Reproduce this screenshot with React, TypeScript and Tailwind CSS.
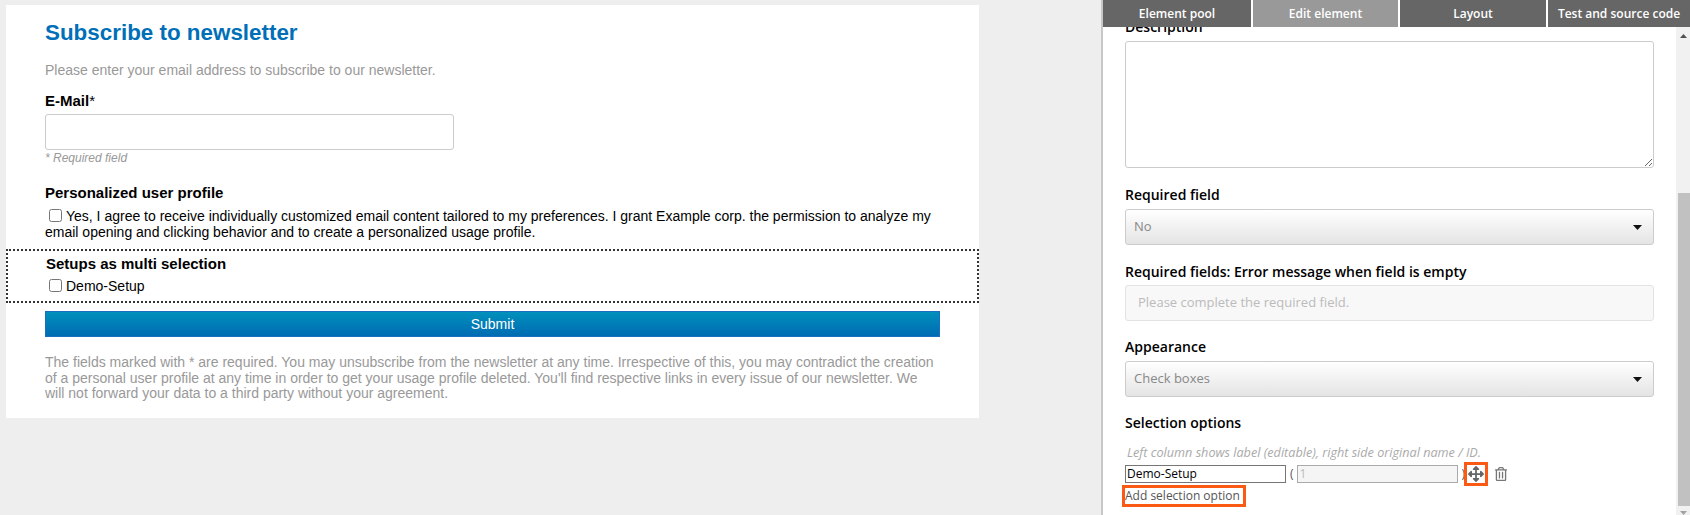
import { ReactNode } from "react";
import { FaArrowsAlt, FaRegTrashAlt } from "react-icons/fa";

const TABS = ["Element pool", "Edit element", "Layout", "Test and source code"];

function FormLabel({ children, className = "" }: { children: ReactNode; className?: string }) {
  return <p className={`text-[15px] font-bold leading-4 text-black ${className}`}>{children}</p>;
}

function Newsletter() {
  return (
    <div className="h-[413px] w-[973px] bg-white font-['Liberation_Sans',Arial,sans-serif] text-[14px]">
      <div className="px-[39px] pt-[14px]">
        <h1 className="text-[22.4px] font-bold leading-[28px] text-[#006fb8]">Subscribe to newsletter</h1>
        <p className="mt-[15px] leading-4 text-[#999]">Please enter your email address to subscribe to our newsletter.</p>
        <FormLabel className="mt-[15px]">
          E-Mail<span className="font-normal">*</span>
        </FormLabel>
        <input className="mt-[5px] block h-[36px] w-[409px] rounded-[3px] border border-[#ccc] bg-white" />
        <p className="mt-px text-[12px] italic leading-[14px] text-[#999]">* Required field</p>
        <FormLabel className="mt-[20px]">Personalized user profile</FormLabel>
        <p className="mt-[8px] w-[900px] leading-[15px] text-black">
          <input type="checkbox" className="mx-[4px] mb-[3px] inline-block size-[13px] align-middle" />
          Yes, I agree to receive individually customized email content tailored to my preferences. I grant Example corp. the permission to analyze my email opening and clicking behavior and to create a personalized usage profile.
        </p>
      </div>
      <div className="mt-[9px] h-[54px] border-2 border-dotted border-[#333] pl-[38px] pt-[5px]">
        <FormLabel>Setups as multi selection</FormLabel>
        <label className="mt-[4px] flex items-center text-black">
          <input type="checkbox" className="mb-[2px] ml-[3px] mr-[4px] size-[13px]" />
          Demo-Setup
        </label>
      </div>
      <div className="px-[39px]">
        <button className="mt-[8px] block h-[26px] w-[895px] border border-[#1a6fc0] bg-gradient-to-b from-[#0090bb] to-[#006bb3] text-center text-white">
          Submit
        </button>
        <p className="mt-[18px] w-[895px] leading-[15.5px] text-[#999]">
          The fields marked with * are required. You may unsubscribe from the newsletter at any time. Irrespective of this, you may contradict the creation of a personal user profile at any time in order to get your usage profile deleted. You'll find respective links in every issue of our newsletter. We will not forward your data to a third party without your agreement.
        </p>
      </div>
    </div>
  );
}

function SelectBox({ value }: { value: string }) {
  return (
    <div className="flex h-[36px] items-center justify-between rounded-[3px] border border-[#ccc] bg-gradient-to-b from-white to-[#e4e4e4] pl-[8px] pr-[11px] text-[13px] text-[#888]">
      {value}
      <svg width="9" height="5" viewBox="0 0 9 5">
        <path d="M0 0h9L4.5 5z" fill="#111" />
      </svg>
    </div>
  );
}

function FieldLabel({ children, className = "" }: { children: ReactNode; className?: string }) {
  return <p className={`text-[14px] font-semibold leading-[20px] text-black ${className}`}>{children}</p>;
}

function Editor() {
  return (
    <div className="flex flex-1 flex-col border-l-2 border-[#c8c8c8] bg-white font-['Open_Sans',sans-serif]">
      <div className="relative z-10 grid h-[27px] grid-cols-[148px_145px_146px_1fr] gap-[2px] bg-white">
        {TABS.map((tab) => (
          <div
            key={tab}
            className={`flex items-center justify-center text-[12px] font-semibold text-white ${tab === "Edit element" ? "bg-[#999]" : "bg-[#666]"}`}
          >
            {tab}
          </div>
        ))}
      </div>
      <div className="flex min-h-0 flex-1">
        <div className="min-w-0 flex-1 overflow-hidden px-[22px]">
          <FieldLabel className="-mt-[10px]">Description</FieldLabel>
          <textarea className="mt-[4px] block h-[127px] w-full rounded-[3px] border border-[#ccc]" />
          <FieldLabel className="mt-[17px]">Required field</FieldLabel>
          <div className="mt-[4px]">
            <SelectBox value="No" />
          </div>
          <FieldLabel className="mt-[17px]">Required fields: Error message when field is empty</FieldLabel>
          <div className="mt-[3px] flex h-[36px] items-center rounded-[3px] border border-[#e3e3e3] bg-[#f8f8f8] pl-[12px] text-[13px] text-[#bbb]">
            Please complete the required field.
          </div>
          <FieldLabel className="mt-[16px]">Appearance</FieldLabel>
          <div className="mt-[4px]">
            <SelectBox value="Check boxes" />
          </div>
          <FieldLabel className="mt-[16px]">Selection options</FieldLabel>
          <p className="mt-[11px] pl-[2px] text-[12.65px] italic leading-[16px] text-[#aaa]">
            Left column shows label (editable), right side original name / ID.
          </p>
          <div className="mt-[5px] flex h-[18px] items-center text-[12px]">
            <input
              defaultValue="Demo-Setup"
              className="h-[18px] w-[161px] border border-[#767676] px-px text-black"
            />
            <span className="ml-[4px] text-[#555]">(</span>
            <input
              disabled
              defaultValue="1"
              className="ml-[3px] h-[18px] w-[161px] border border-[#aaa] bg-[#f5f5f5] px-[2px] text-[#bbb]"
            />
            <span className="ml-[4px] w-[2px] overflow-hidden text-[#555]">)</span>
            <span className="flex h-[24px] w-[24px] shrink-0 items-center justify-center border-[3px] border-[#fa5a14] text-[#666]">
              <FaArrowsAlt size={16} />
            </span>
            <FaRegTrashAlt size={14} className="ml-[6px] text-[#777]" />
          </div>
          <div className="-ml-[3px] mt-[2px] flex">
            <a className="flex h-[22px] items-center border-[3px] border-[#fa5a14] pr-[3px] text-[12px] text-[#555]">
              Add selection option
            </a>
          </div>
        </div>
        <div className="flex w-[14px] flex-col bg-[#f1f1f1]">
          <div className="flex h-[14px] items-center justify-center pt-[3px]">
            <svg width="7" height="4" viewBox="0 0 7 4">
              <path d="M3.5 0L7 4H0z" fill="#505050" />
            </svg>
          </div>
          <div className="h-[152px]" />
          <div className="ml-[2px] flex-1 bg-[#c1c1c1]" />
          <div className="flex h-[9px] items-end justify-center">
            <svg width="7" height="4" viewBox="0 0 7 4">
              <path d="M0 0h7L3.5 4z" fill="#a3a3a3" />
            </svg>
          </div>
        </div>
      </div>
    </div>
  );
}

export default function App() {
  return (
    <div className="flex h-[515px] w-[1690px] overflow-hidden bg-[#eee]">
      <div className="w-[1101px] pl-[6px] pt-[5px]">
        <Newsletter />
      </div>
      <Editor />
    </div>
  );
}
